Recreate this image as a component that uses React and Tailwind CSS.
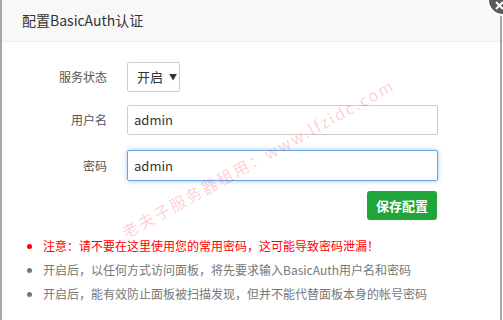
import React from 'react';

const font = { fontFamily: '"Noto Sans CJK SC", "Noto Sans", sans-serif' };

export default function App() {
  return (
    <div className="relative w-[503px] h-[320px] overflow-hidden bg-white" style={font}>
      <div className="absolute left-0 top-0 bottom-0 w-[2px] bg-[#a8a8a8]" />
      <div className="absolute right-[1px] top-0 bottom-0 w-[2px] bg-[#a8a8a8]" />

      <div className="h-[42px] bg-[#f8f8f8] border-b border-[#eeeeee] flex items-center pl-[22px] text-[14px] text-[#333]">
        配置BasicAuth认证
      </div>

      <div className="relative flex flex-col pt-[20px]">
        <div className="flex items-center h-[30px]">
          <div className="w-[107px] text-right text-[12px] text-[#555]">服务状态</div>
          <div className="ml-[20px] w-[53px] h-[30px] border border-[#cccccc] rounded-[2px] flex items-center pl-[9px] text-[13px] text-[#333] whitespace-nowrap">
            <span className="shrink-0">开启</span>
            <span className="ml-[6px] text-[8px] shrink-0">▼</span>
          </div>
        </div>

        <div className="flex items-center h-[30px] mt-[13px]">
          <div className="w-[107px] text-right text-[12px] text-[#555]">用户名</div>
          <div className="ml-[20px] w-[311px] h-[30px] border border-[#cccccc] rounded-[2px] flex items-center pl-[6px] text-[13px] text-[#333]">
            admin
          </div>
        </div>

        <div className="flex items-center h-[31px] mt-[15px]">
          <div className="w-[107px] text-right text-[12px] text-[#555]">密码</div>
          <div className="ml-[20px] w-[311px] h-[31px] border border-[#66a3e8] rounded-[2px] flex items-center pl-[6px] text-[13px] text-[#333] shadow-[0_0_5px_rgba(102,163,232,0.6)]">
            admin
          </div>
        </div>

        <div className="flex justify-end pr-[66px] mt-[10px]">
          <div className="w-[70px] h-[29px] bg-[#20a53a] rounded-[3px] text-white text-[13px] font-bold flex items-center justify-center">
            保存配置
          </div>
        </div>

        <ul className="mt-[17px] flex flex-col gap-[6px] text-[12px] leading-[18px]">
          <li className="flex items-center text-[#ff0000]">
            <span className="ml-[27px] w-[5px] h-[5px] rounded-full bg-[#ff0000]" />
            <span className="ml-[11px]">注意：请不要在这里使用您的常用密码，这可能导致密码泄漏！</span>
          </li>
          <li className="flex items-center text-[#777]">
            <span className="ml-[27px] w-[5px] h-[5px] rounded-full bg-[#777]" />
            <span className="ml-[11px]">开启后，以任何方式访问面板，将先要求输入BasicAuth用户名和密码</span>
          </li>
          <li className="flex items-center text-[#777]">
            <span className="ml-[27px] w-[5px] h-[5px] rounded-full bg-[#777]" />
            <span className="ml-[11px]">开启后，能有效防止面板被扫描发现，但并不能代替面板本身的帐号密码</span>
          </li>
        </ul>
      </div>

      <div className="absolute left-[258px] top-[158px] -translate-x-1/2 -translate-y-1/2 -rotate-[29deg] whitespace-nowrap text-[16px] tracking-[2px] text-[rgba(255,0,0,0.2)] pointer-events-none">
        老夫子服务器租用：www.lfzidc.com
      </div>

      <div className="absolute right-[-16px] top-[-16px] w-[32px] h-[32px] rounded-full bg-[#5a5a5a] border-2 border-white flex items-end justify-start pl-[6px] pb-[4px]">
        <svg width="9" height="9" viewBox="0 0 9 9">
          <path d="M1 1 L8 8 M8 1 L1 8" stroke="white" strokeWidth="2" />
        </svg>
      </div>
    </div>
  );
}
